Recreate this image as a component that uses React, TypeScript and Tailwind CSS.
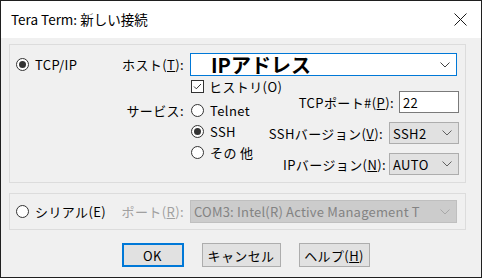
import React from "react";

function Radio({ checked }: { checked?: boolean }) {
  return (
    <span className="w-[13px] h-[13px] rounded-full border border-[#333333] bg-white flex items-center justify-center shrink-0">
      {checked && <span className="w-[7px] h-[7px] rounded-full bg-[#333333]" />}
    </span>
  );
}

function Chevron({ color = "#606060" }: { color?: string }) {
  return (
    <svg width="10" height="6" viewBox="0 0 10 6" className="shrink-0">
      <path d="M0.5 0.5 L5 5 L9.5 0.5" fill="none" stroke={color} strokeWidth="1" />
    </svg>
  );
}

function Select({ value, width }: { value: string; width: string }) {
  return (
    <div className={`${width} h-[22px] shrink-0 border border-[#adadad] bg-[#e1e1e1] flex items-center justify-between pl-[3px] pr-[6px]`}>
      <span>{value}</span>
      <Chevron />
    </div>
  );
}

function Label({ children, className = "" }: { children: React.ReactNode; className?: string }) {
  return (
    <div className={`w-[64px] shrink-0 flex items-center justify-end ${className}`}>
      <span className="whitespace-nowrap shrink-0">{children}</span>
    </div>
  );
}

export default function App() {
  return (
    <div
      className="w-[482px] h-[279px] bg-white text-[13px] tracking-[0.4px] text-black leading-none"
      style={{ fontFamily: '"Noto Sans CJK JP", "Noto Sans", sans-serif' }}
    >
      <div className="w-[482px] h-[278px] border border-[#1f1f1f] bg-[#f0f0f0] flex flex-col">
        {/* title bar */}
        <div className="h-[37px] bg-white flex items-center justify-between pl-[10px] pr-[14px] text-[13.5px] tracking-normal">
          <span>Tera Term: 新しい接続</span>
          <svg width="13" height="13" viewBox="0 0 13 13">
            <path d="M0.5 0.5 L12.5 12.5 M12.5 0.5 L0.5 12.5" stroke="#1a1a1a" strokeWidth="1" />
          </svg>
        </div>

        <div className="flex flex-col pt-[6px]">
          {/* TCP/IP group */}
          <div className="ml-[8px] w-[457px] h-[139px] border border-[#dcdcdc] flex">
            <div className="w-[110px] shrink-0 pl-[6px] pt-[8px]">
              <div className="h-[23px] flex items-center gap-[6px]">
                <Radio checked />
                <span>TCP/IP</span>
              </div>
            </div>
            <div className="flex-1 min-w-0 pt-[8px] pr-[6px] flex flex-col">
              <div className="flex items-center gap-[6px]">
                <Label>
                  ホスト(<u>T</u>):
                </Label>
                <div className="w-[267px] h-[23px] shrink-0 border border-[#0078d7] bg-white flex items-center justify-between pl-[20px] pr-[6px]">
                  <span className="text-[20px] font-bold tracking-normal">IPアドレス</span>
                  <Chevron color="#404040" />
                </div>
              </div>
              <div className="flex">
                <div className="flex-1 min-w-0 flex flex-col">
                  <div className="mt-[4px] ml-[71px] h-[13px] flex items-center gap-[5px]">
                    <span className="w-[13px] h-[13px] shrink-0 border border-[#333333] bg-white flex items-center justify-center">
                      <svg width="11" height="11" viewBox="0 0 11 11">
                        <path d="M2 5.5 L4.3 7.8 L9 3" fill="none" stroke="#333333" strokeWidth="1" />
                      </svg>
                    </span>
                    <span className="whitespace-nowrap">ヒストリ(O)</span>
                  </div>
                  <div className="mt-[7px] flex gap-[7px]">
                    <Label className="h-[21px]">サービス:</Label>
                    <div className="flex flex-col">
                      <div className="h-[21px] flex items-center gap-[6px]">
                        <Radio />
                        <span>Telnet</span>
                      </div>
                      <div className="h-[21px] flex items-center gap-[6px]">
                        <Radio checked />
                        <span>SSH</span>
                      </div>
                      <div className="h-[21px] flex items-center gap-[6px]">
                        <Radio />
                        <span className="whitespace-nowrap">その 他</span>
                      </div>
                    </div>
                  </div>
                </div>
                <div className="shrink-0 mt-[15px] flex flex-col gap-[9px]">
                  <div className="flex items-center justify-end gap-[5px]">
                    <span className="whitespace-nowrap">
                      TCPポート#(<u>P</u>):
                    </span>
                    <div className="w-[60px] h-[22px] shrink-0 border border-[#7a7a7a] bg-white flex items-center pl-[3px]">
                      22
                    </div>
                  </div>
                  <div className="flex items-center justify-end gap-[6px]">
                    <span className="whitespace-nowrap">
                      SSHバージョン(<u>V</u>):
                    </span>
                    <Select value="SSH2" width="w-[70px]" />
                  </div>
                  <div className="flex items-center justify-end gap-[3px]">
                    <span className="whitespace-nowrap">
                      IPバージョン(<u>N</u>):
                    </span>
                    <Select value="AUTO" width="w-[70px]" />
                  </div>
                </div>
              </div>
            </div>
          </div>

          {/* serial group */}
          <div className="ml-[8px] mt-[10px] w-[457px] h-[37px] border border-[#dcdcdc] flex items-center">
            <div className="w-[110px] shrink-0 pl-[6px] flex items-center gap-[6px]">
              <Radio />
              <span className="whitespace-nowrap">シリアル(E)</span>
            </div>
            <Label className="text-[#a0a0a0]">
              ポート(<u>R</u>):
            </Label>
            <div className="ml-[6px] w-[267px] h-[23px] shrink-0 border border-[#bfbfbf] bg-[#cccccc] flex items-center justify-between pl-[3px] pr-[6px] text-[#838383]">
              <span className="whitespace-nowrap tracking-[0.2px]">COM3: Intel(R) Active Management T</span>
              <Chevron color="#a8a8a8" />
            </div>
          </div>

          {/* buttons */}
          <div className="mt-[13px] flex justify-center pl-[9px] gap-[18px]">
            <button className="w-[62px] h-[24px] border-2 border-[#0078d7] bg-[#e1e1e1]">OK</button>
            <button className="w-[79px] h-[24px] border border-[#adadad] bg-[#e1e1e1]">キャンセル</button>
            <button className="w-[71px] h-[24px] border border-[#adadad] bg-[#e1e1e1] whitespace-nowrap">
              ヘルプ(<u>H</u>)
            </button>
          </div>
        </div>
      </div>
    </div>
  );
}
